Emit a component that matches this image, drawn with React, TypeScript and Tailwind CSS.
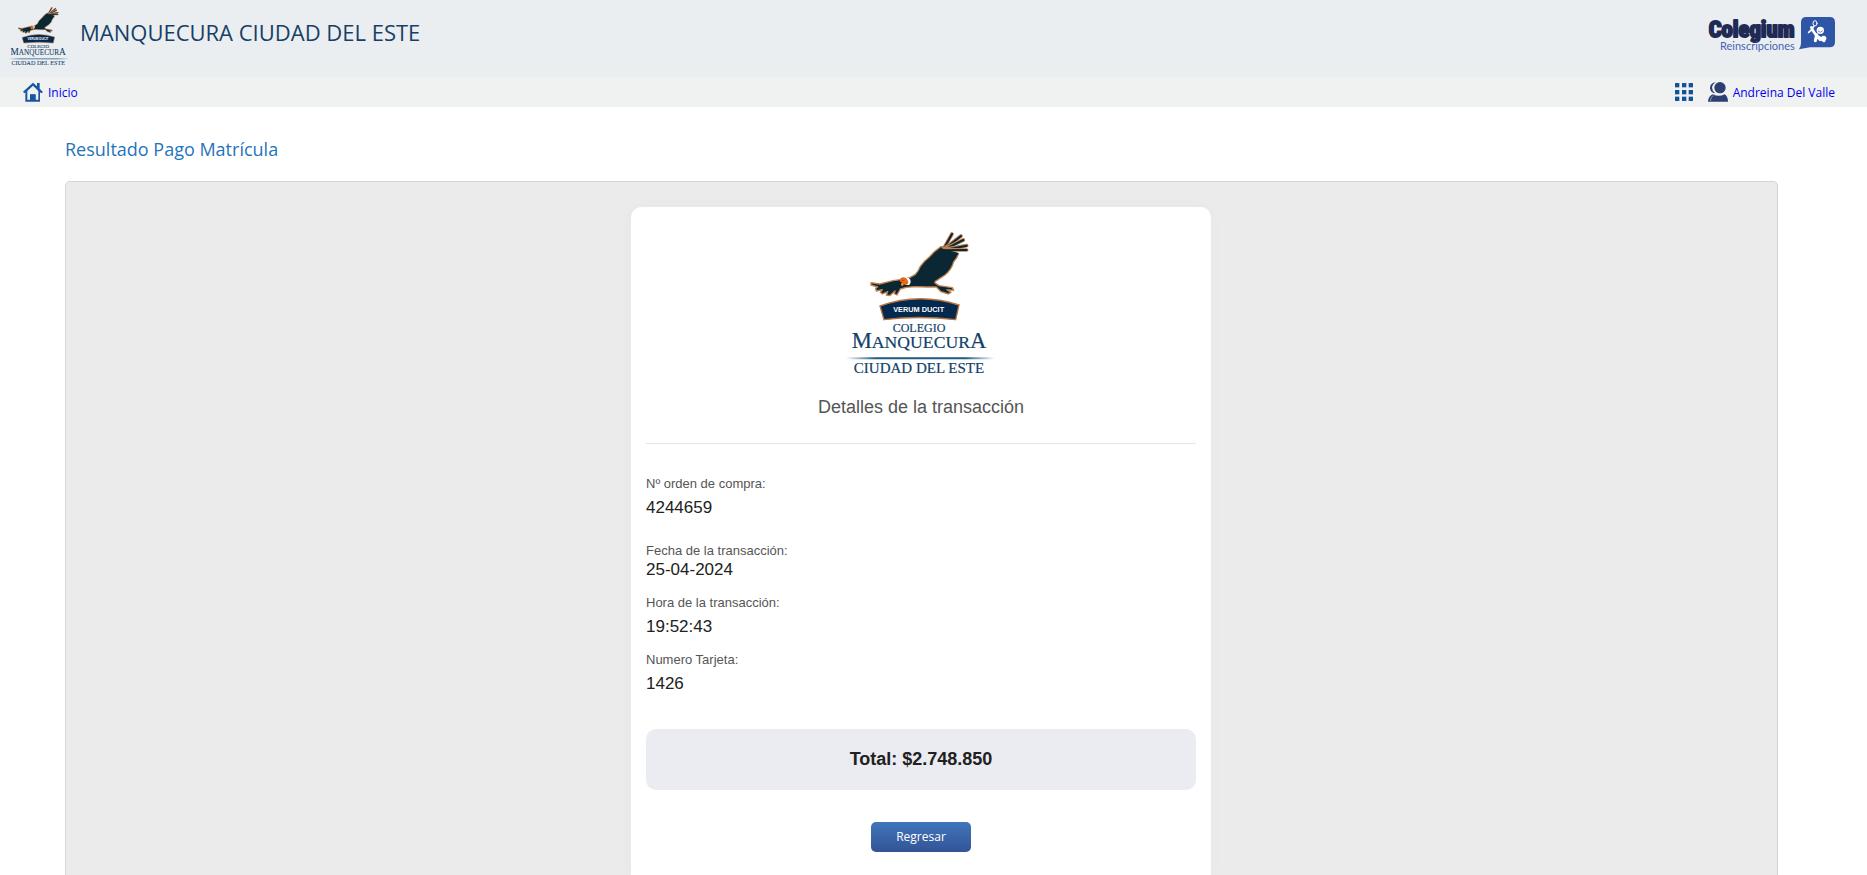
import React from "react";

const featherTips = [
  [277, 27],
  [304, 33],
  [311, 45],
  [321, 62],
  [321, 75],
];

function SchoolLogo({ className }: { className: string }) {
  return (
    <svg viewBox="4 0 540 495" className={className} role="img" aria-label="Colegio Manquecura Ciudad del Este">
      <defs>
        <linearGradient id="rule" x1="0" x2="1" y1="0" y2="0">
          <stop offset="0" stopColor="#1f5a80" stopOpacity="0" />
          <stop offset="0.2" stopColor="#1f5a80" />
          <stop offset="0.8" stopColor="#1f5a80" />
          <stop offset="1" stopColor="#1f5a80" stopOpacity="0" />
        </linearGradient>
      </defs>
      <g transform="translate(90 15)">
        <path
          d="M150 158 L166 149 Q176 140 182 124 Q194 108 208 97 L224 80 L243 65 L262 66 L296 88 Q292 100 282 110 Q276 134 256 150 L226 170 L226 174 L238 182 L278 188 L282 196 L262 194 L274 202 L266 207 L244 200 L230 186 L200 186 L165 185 L140 187 L122 192 L112 210 L104 206 L106 198 L90 212 L80 210 L84 200 L68 207 L62 202 L68 194 L50 198 L48 190 L54 186 L34 180 L34 173 L60 177 L100 167 L122 164 Z"
          fill="#0a2733"
          stroke="#c08350"
          strokeWidth="4"
          strokeLinejoin="round"
        />
        {featherTips.map(([x, y]) => (
          <g key={y} strokeLinecap="round">
            <path d={`M250 74 L${x} ${y}`} stroke="#c08350" strokeWidth="11" />
            <path d={`M250 76 L${x} ${y}`} stroke="#0a2733" strokeWidth="6" />
          </g>
        ))}
        <path d="M242 68 L262 76 L298 84 L290 93 L270 104 L236 84 Z" fill="#0a2733" />
        <path d="M134 157 Q146 154 152 164 Q155 174 148 180 L138 180 Z" fill="#fff" />
        <path d="M122 160 Q134 152 142 162 Q148 170 144 177 Q138 182 133 178 L129 184 L124 180 L127 172 L121 170 Z" fill="#e8691b" />
        <path d="M124 175 L131 176 L127 183 Z" fill="#fbb018" />
        <circle cx="130" cy="166" r="2" fill="#7c2f0c" />
      </g>
      <path d="M151 258 Q268 216 388 255 L378 299 Q268 286 163 299 Z" fill="#04294f" stroke="#b9743f" strokeWidth="4" />
      <text x="267" y="276" textAnchor="middle" fontFamily="Liberation Sans, sans-serif" fontWeight="700" fontSize="22" fill="#fff">
        VERUM DUCIT
      </text>
      <g fontFamily="Liberation Serif, serif" fill="#123f68" stroke="#123f68" strokeWidth="0.6" textAnchor="middle">
        <text x="268" y="336" fontSize="36">COLEGIO</text>
        <text x="268" y="383" fontSize="53">
          <tspan fontSize="68">M</tspan>ANQUECUR<tspan fontSize="68">A</tspan>
        </text>
        <text x="268" y="459" fontSize="45">CIUDAD DEL ESTE</text>
      </g>
      <path d="M48 412 H496 V418 H48 Z" fill="url(#rule)" />
    </svg>
  );
}

function ColegiumLogo() {
  return (
    <svg viewBox="0 0 387 120" className="h-10 w-[129px]" role="img" aria-label="Colegium Reinscripciones">
      <text x="8" y="68" fontFamily="Roboto Condensed, Open Sans Condensed, Liberation Sans, sans-serif" fontWeight="700" fontSize="68" fill="#1f2a55" stroke="#1f2a55" strokeWidth="6" strokeLinejoin="round">
        Colegium
      </text>
      <text x="42" y="109" fontFamily="Lato, sans-serif" fontSize="33" fill="#4464b4">
        Reinscripciones
      </text>
      <path d="M301 9 H371 Q387 9 387 25 V84 Q387 100 371 100 H312 L279 106 Q285 98 285 88 V25 Q285 9 301 9 Z" fill="#2f56a6" />
      <g stroke="#fff" strokeLinecap="round" strokeLinejoin="round" fill="none">
        <ellipse cx="327" cy="28" rx="6" ry="8" strokeWidth="3" />
        <path d="M323 37 L317 47 L308 55" strokeWidth="5" />
        <path d="M316 40 L322 52 L332 66" strokeWidth="8" />
        <path d="M332 62 L328 80 M336 68 L354 80 M334 68 L342 76" strokeWidth="9" />
      </g>
      <circle cx="343" cy="49" r="11" fill="#fff" />
      <path d="M336 51 Q343 59 350 50" stroke="#2f56a6" strokeWidth="2" fill="none" />
      <circle cx="353" cy="73" r="8" fill="#fff" />
    </svg>
  );
}

function HomeIcon() {
  return (
    <svg viewBox="0 0 60 60" className="h-5 w-5" aria-hidden="true">
      <path d="M30 2 L42 13 V3 H50 V20 L60 30 L55 34 L51 31 V59 H7 V31 L4 34 L0 29 Z M30 11 L13 27 V53 H21 V37 H38 V53 H46 V27 Z" fill="#1656a3" fillRule="evenodd" />
      <path d="M22 38 H37 V54 H22 Z" fill="#1656a3" />
    </svg>
  );
}

function GridIcon() {
  const steps = [0, 21, 41];
  return (
    <svg viewBox="0 0 54 54" className="h-[18px] w-[18px]" aria-hidden="true">
      {steps.map((y) => steps.map((x) => <rect key={`${x}-${y}`} x={x} y={y} width="13" height="13" fill="#14539c" />))}
    </svg>
  );
}

function UserIcon() {
  return (
    <svg viewBox="0 0 60 60" className="h-5 w-5" aria-hidden="true">
      <path d="M24 1 Q6 3 6 18 Q7 32 22 34 Q12 26 12 17 Q13 7 24 1 Z" fill="#2c3f70" />
      <circle cx="36" cy="17" r="17" fill="#2c3f70" />
      <path d="M0 59 Q1 42 15 37 Q32 46 50 37 Q60 44 60 59 Z" fill="#2c3f70" />
      <path d="M7 57 Q8 46 16 40" stroke="#b9c2d6" strokeWidth="2" fill="none" />
    </svg>
  );
}

function Detail({ label, value, tight = false }: { label: string; value: string; tight?: boolean }) {
  return (
    <div className={tight ? "flex flex-col gap-px" : "flex flex-col gap-[6px]"}>
      <dt className="text-[13px] leading-[18px] text-[#555]">{label}</dt>
      <dd className="text-[17px] leading-[18px] text-[#212121]">{value}</dd>
    </div>
  );
}

export default function App() {
  return (
    <div className="flex min-h-screen flex-col bg-white font-['Open_Sans',sans-serif]">
      <header className="flex h-[77px] items-start justify-between bg-[#ebeef1] pr-8 pl-[2px]">
        <div className="flex items-start gap-1 pt-[2px]">
          <SchoolLogo className="h-[68px] w-[74px]" />
          <h1 className="pt-[15px] text-[22px] leading-[30px] text-[#173f66]">MANQUECURA CIUDAD DEL ESTE</h1>
        </div>
        <div className="pt-[14px]">
          <ColegiumLogo />
        </div>
      </header>

      <nav className="flex h-[30px] items-center justify-between bg-[#f0f2f1] pr-8 pl-[23px] text-xs text-[#0000ee]">
        <a href="#inicio" className="flex items-end gap-[5px] leading-[18px]">
          <HomeIcon />
          Inicio
        </a>
        <div className="flex items-center gap-[15px]">
          <button type="button" aria-label="Aplicaciones">
            <GridIcon />
          </button>
          <a href="#perfil" className="flex items-end gap-[5px] leading-[18px]">
            <UserIcon />
            Andreina Del Valle
          </a>
        </div>
      </nav>

      <main className="flex grow flex-col pr-[89px] pl-[65px]">
        <h2 className="pt-[30px] pb-5 text-lg leading-6 text-[#1f74bb]">Resultado Pago Matrícula</h2>
        <div className="flex grow justify-center rounded-t-[5px] border border-b-0 border-[#d5d6d7] bg-[#ebebeb] pt-[25px] pr-px font-['Liberation_Sans',Arial,sans-serif]">
          <section className="flex w-full max-w-[580px] flex-col items-center rounded-t-[10px] bg-white px-[15px] pt-[13px] pb-5 shadow-[0_0_10px_#e6e6e6]">
            <SchoolLogo className="h-[165px] w-[180px]" />
            <h3 className="w-full border-b border-[#e6e6e6] pt-[10px] pb-6 text-center text-lg leading-6 text-[#555]">
              Detalles de la transacción
            </h3>
            <dl className="flex w-full flex-col gap-[15px] pt-[31px]">
              <div className="pb-[10px]">
                <Detail label="Nº orden de compra:" value="4244659" />
              </div>
              <Detail label="Fecha de la transacción:" value="25-04-2024" tight />
              <Detail label="Hora de la transacción:" value="19:52:43" />
              <Detail label="Numero Tarjeta:" value="1426" />
            </dl>
            <p className="mt-9 w-full rounded-[10px] bg-[#ebecf2] pt-[18px] pb-[19px] text-center text-lg leading-6 font-bold text-[#212121]">
              Total: $2.748.850
            </p>
            <button
              type="button"
              className="mt-8 h-[30px] w-[100px] rounded-[5px] bg-linear-to-b from-[#4275ba] to-[#335497] font-['Open_Sans',sans-serif] text-xs text-white"
            >
              Regresar
            </button>
          </section>
        </div>
      </main>
    </div>
  );
}
